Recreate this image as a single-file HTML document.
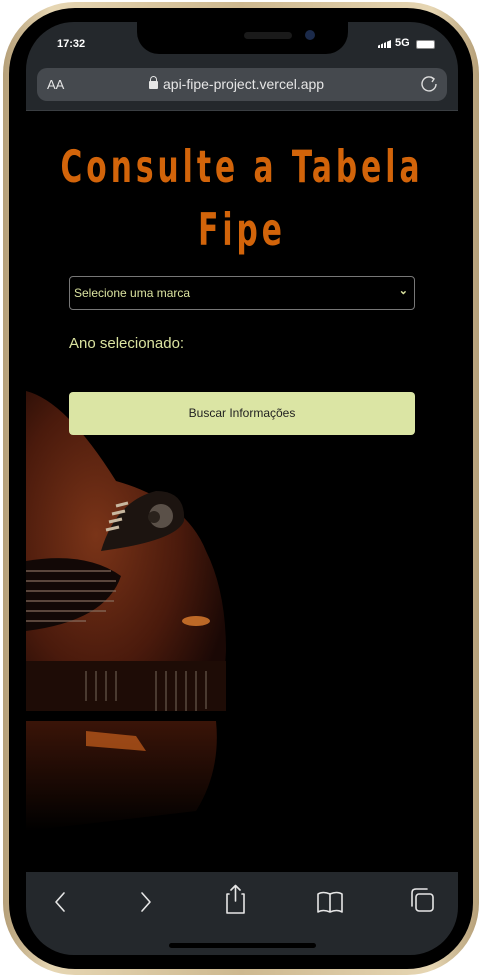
<!DOCTYPE html>
<html><head><meta charset="utf-8"><style>
*{margin:0;padding:0;box-sizing:border-box}
body{width:482px;height:977px;background:#fff;position:relative;overflow:hidden;font-family:"Liberation Sans",sans-serif}
.bezel{position:absolute;left:3px;top:2px;width:476px;height:973px;border-radius:72px;background:linear-gradient(90deg,#b59f78,#e6d6b3 10%,#cdb88f 50%,#e6d6b3 90%,#b59f78);}
.body{position:absolute;left:9px;top:8px;width:464px;height:961px;border-radius:66px;background:#000}
.screen{position:absolute;left:26px;top:22px;width:432px;height:933px;border-radius:48px;overflow:hidden;background:#000}
.status{position:absolute;left:0;top:0;width:432px;height:89px;background:#24282c;border-bottom:1px solid #3a3e42}
.notch{position:absolute;left:111px;top:0;width:211px;height:32px;background:#000;border-radius:0 0 22px 22px}
.addr{position:absolute;left:11px;top:46px;width:410px;height:33px;background:#45494e;border-radius:10px;color:#e6e6e6}
.content{position:absolute;left:0;top:89px;width:432px;height:761px;background:#000;overflow:hidden}
.title{position:absolute;left:0;width:432px;text-align:center;color:#d2640a;font-family:"DejaVu Sans Condensed","Liberation Sans Narrow",sans-serif;font-weight:bold;font-size:33px;letter-spacing:4px;transform:scaleY(1.35)}
.sel{position:absolute;left:43px;top:165px;width:346px;height:34px;border:1px solid #777;border-radius:4px;color:#dbe3a0;font-size:12px;padding:9px 4px}
.btn{position:absolute;left:43px;top:281px;width:346px;height:43px;background:#dbe5a4;border-radius:4px;text-align:center;line-height:43px;font-size:12px;color:#222}
.tool{position:absolute;left:0;top:850px;width:432px;height:83px;background:#24282c}
</style></head><body>
<div class="bezel"></div><div class="body"></div>
<div class="screen">
 <div class="status">
  <div class="notch"><div style="position:absolute;left:107px;top:10px;width:48px;height:7px;border-radius:4px;background:#1a1a1a"></div><div style="position:absolute;left:168px;top:8px;width:10px;height:10px;border-radius:50%;background:#1b2a4a"></div></div>
  <div style="position:absolute;left:31px;top:16px;color:#fff;font-weight:bold;font-size:11px">17:32</div>
  <div style="position:absolute;left:352px;top:18px;width:13px;height:8px;background:linear-gradient(90deg,#fff 2px,transparent 2px,transparent 3px,#fff 3px,#fff 5px,transparent 5px,transparent 6px,#fff 6px,#fff 8px,transparent 8px,transparent 9px,#fff 9px);clip-path:polygon(0 70%,100% 0,100% 100%,0 100%)"></div>
  <div style="position:absolute;left:369px;top:15px;color:#fff;font-weight:bold;font-size:11px">5G</div>
  <div style="position:absolute;left:390px;top:18px;width:19px;height:9px;border:1px solid #888;border-radius:2px;background:#fff"></div>
  <div class="addr">
   <div style="position:absolute;left:10px;top:9px;font-size:13px">AA</div>
   <div style="position:absolute;left:112px;top:13px;width:9px;height:8px;background:#e6e6e6;border-radius:1px"></div>
   <div style="position:absolute;left:113px;top:8px;width:7px;height:7px;border:1.5px solid #e6e6e6;border-bottom:none;border-radius:4px 4px 0 0"></div>
   <div style="position:absolute;left:126px;top:8px;font-size:14px">api-fipe-project.vercel.app</div>
   <svg style="position:absolute;left:384px;top:7px" width="18" height="18" viewBox="0 0 18 18"><path d="M13 4A7 7 0 1 0 15 9" fill="none" stroke="#ddd" stroke-width="1.4"/><path d="M10 2L13 4L11 7" fill="none" stroke="#ddd" stroke-width="1.4"/></svg>
  </div>
 </div>
 <div class="content">
  <svg style="position:absolute;left:0;top:280px" width="240" height="480" viewBox="0 0 240 480">
   <defs>
    <radialGradient id="g1" cx="0.35" cy="0.45" r="0.7"><stop offset="0" stop-color="#7a3418"/><stop offset="0.6" stop-color="#4a1a0c"/><stop offset="1" stop-color="#1a0805"/></radialGradient>
    <linearGradient id="g2" x1="0" y1="0" x2="0" y2="1"><stop offset="0" stop-color="#3a1408"/><stop offset="1" stop-color="#000"/></linearGradient>
   </defs>
   <path d="M0 0Q40 10 90 90Q160 110 180 160Q200 200 200 260Q198 300 190 320L0 320Z" fill="url(#g1)"/>
   <path d="M0 330L190 330Q195 380 170 420L0 440Z" fill="url(#g2)"/>
   <path d="M0 170Q60 160 95 185Q80 230 0 240Z" fill="#120806"/>
   <g stroke="#8a7060" stroke-width="1.5" opacity="0.8"><path d="M0 180H85M0 190H90M0 200H90M0 210H88M0 220H80M0 230H60"/></g>
   <path d="M75 160Q90 110 130 100Q160 100 158 130Q150 150 75 160Z" fill="#1c1410"/>
   <circle cx="135" cy="125" r="12" fill="#5a5048"/><circle cx="128" cy="126" r="6" fill="#2a221c"/>
   <g stroke="#c8b8a0" stroke-width="3"><path d="M90 115L102 112M86 123L99 120M83 131L96 128M80 139L93 136"/></g>
   <ellipse cx="170" cy="230" rx="14" ry="5" fill="#e08030" opacity="0.8"/>
   <path d="M0 270H200V320H0Z" fill="#1e0c06"/>
   <g stroke="#4a3a30" stroke-width="2"><path d="M130 280V320M140 280V320M150 280V320M160 280V320M170 280V320M180 280V318M60 280V310M70 280V310M80 280V310M90 280V310"/></g>
   <path d="M60 340L110 345L120 360L60 355Z" fill="#c8601c" opacity="0.7"/>
  </svg>
  <div class="title" style="top:36px">Consulte a Tabela</div>
  <div class="title" style="top:99px">Fipe</div>
  <div class="sel">Selecione uma marca<span style="position:absolute;right:6px;top:7px;font-size:11px;font-weight:bold">⌄</span></div>
  <div style="position:absolute;left:43px;top:224px;color:#dbe3a0;font-size:15px">Ano selecionado:</div>
  <div class="btn">Buscar Informações</div>
 </div>
 <div class="tool">
  <svg width="432" height="83" viewBox="0 0 432 83" fill="none" stroke="#e6e6e6" stroke-width="1.6" stroke-linecap="round" stroke-linejoin="round">
   <path d="M38 21L30 30L38 39"/><path d="M116 21L124 30L116 39"/>
   <path d="M203 22H201V41H218V22H216M209.5 29V14M205 18L209.5 13.5L214 18"/>
   <path d="M304 40V22Q297 19 292 22V40Q297 37 304 40Q311 37 316 40V22Q311 19 304 22"/>
   <rect x="390" y="22" width="17" height="17" rx="3"/><path d="M386 34V21Q386 17 390 17H401"/>
  </svg>
  <div style="position:absolute;left:143px;top:71px;width:147px;height:5px;border-radius:3px;background:#000"></div>
 </div>
</div>
</body></html>
